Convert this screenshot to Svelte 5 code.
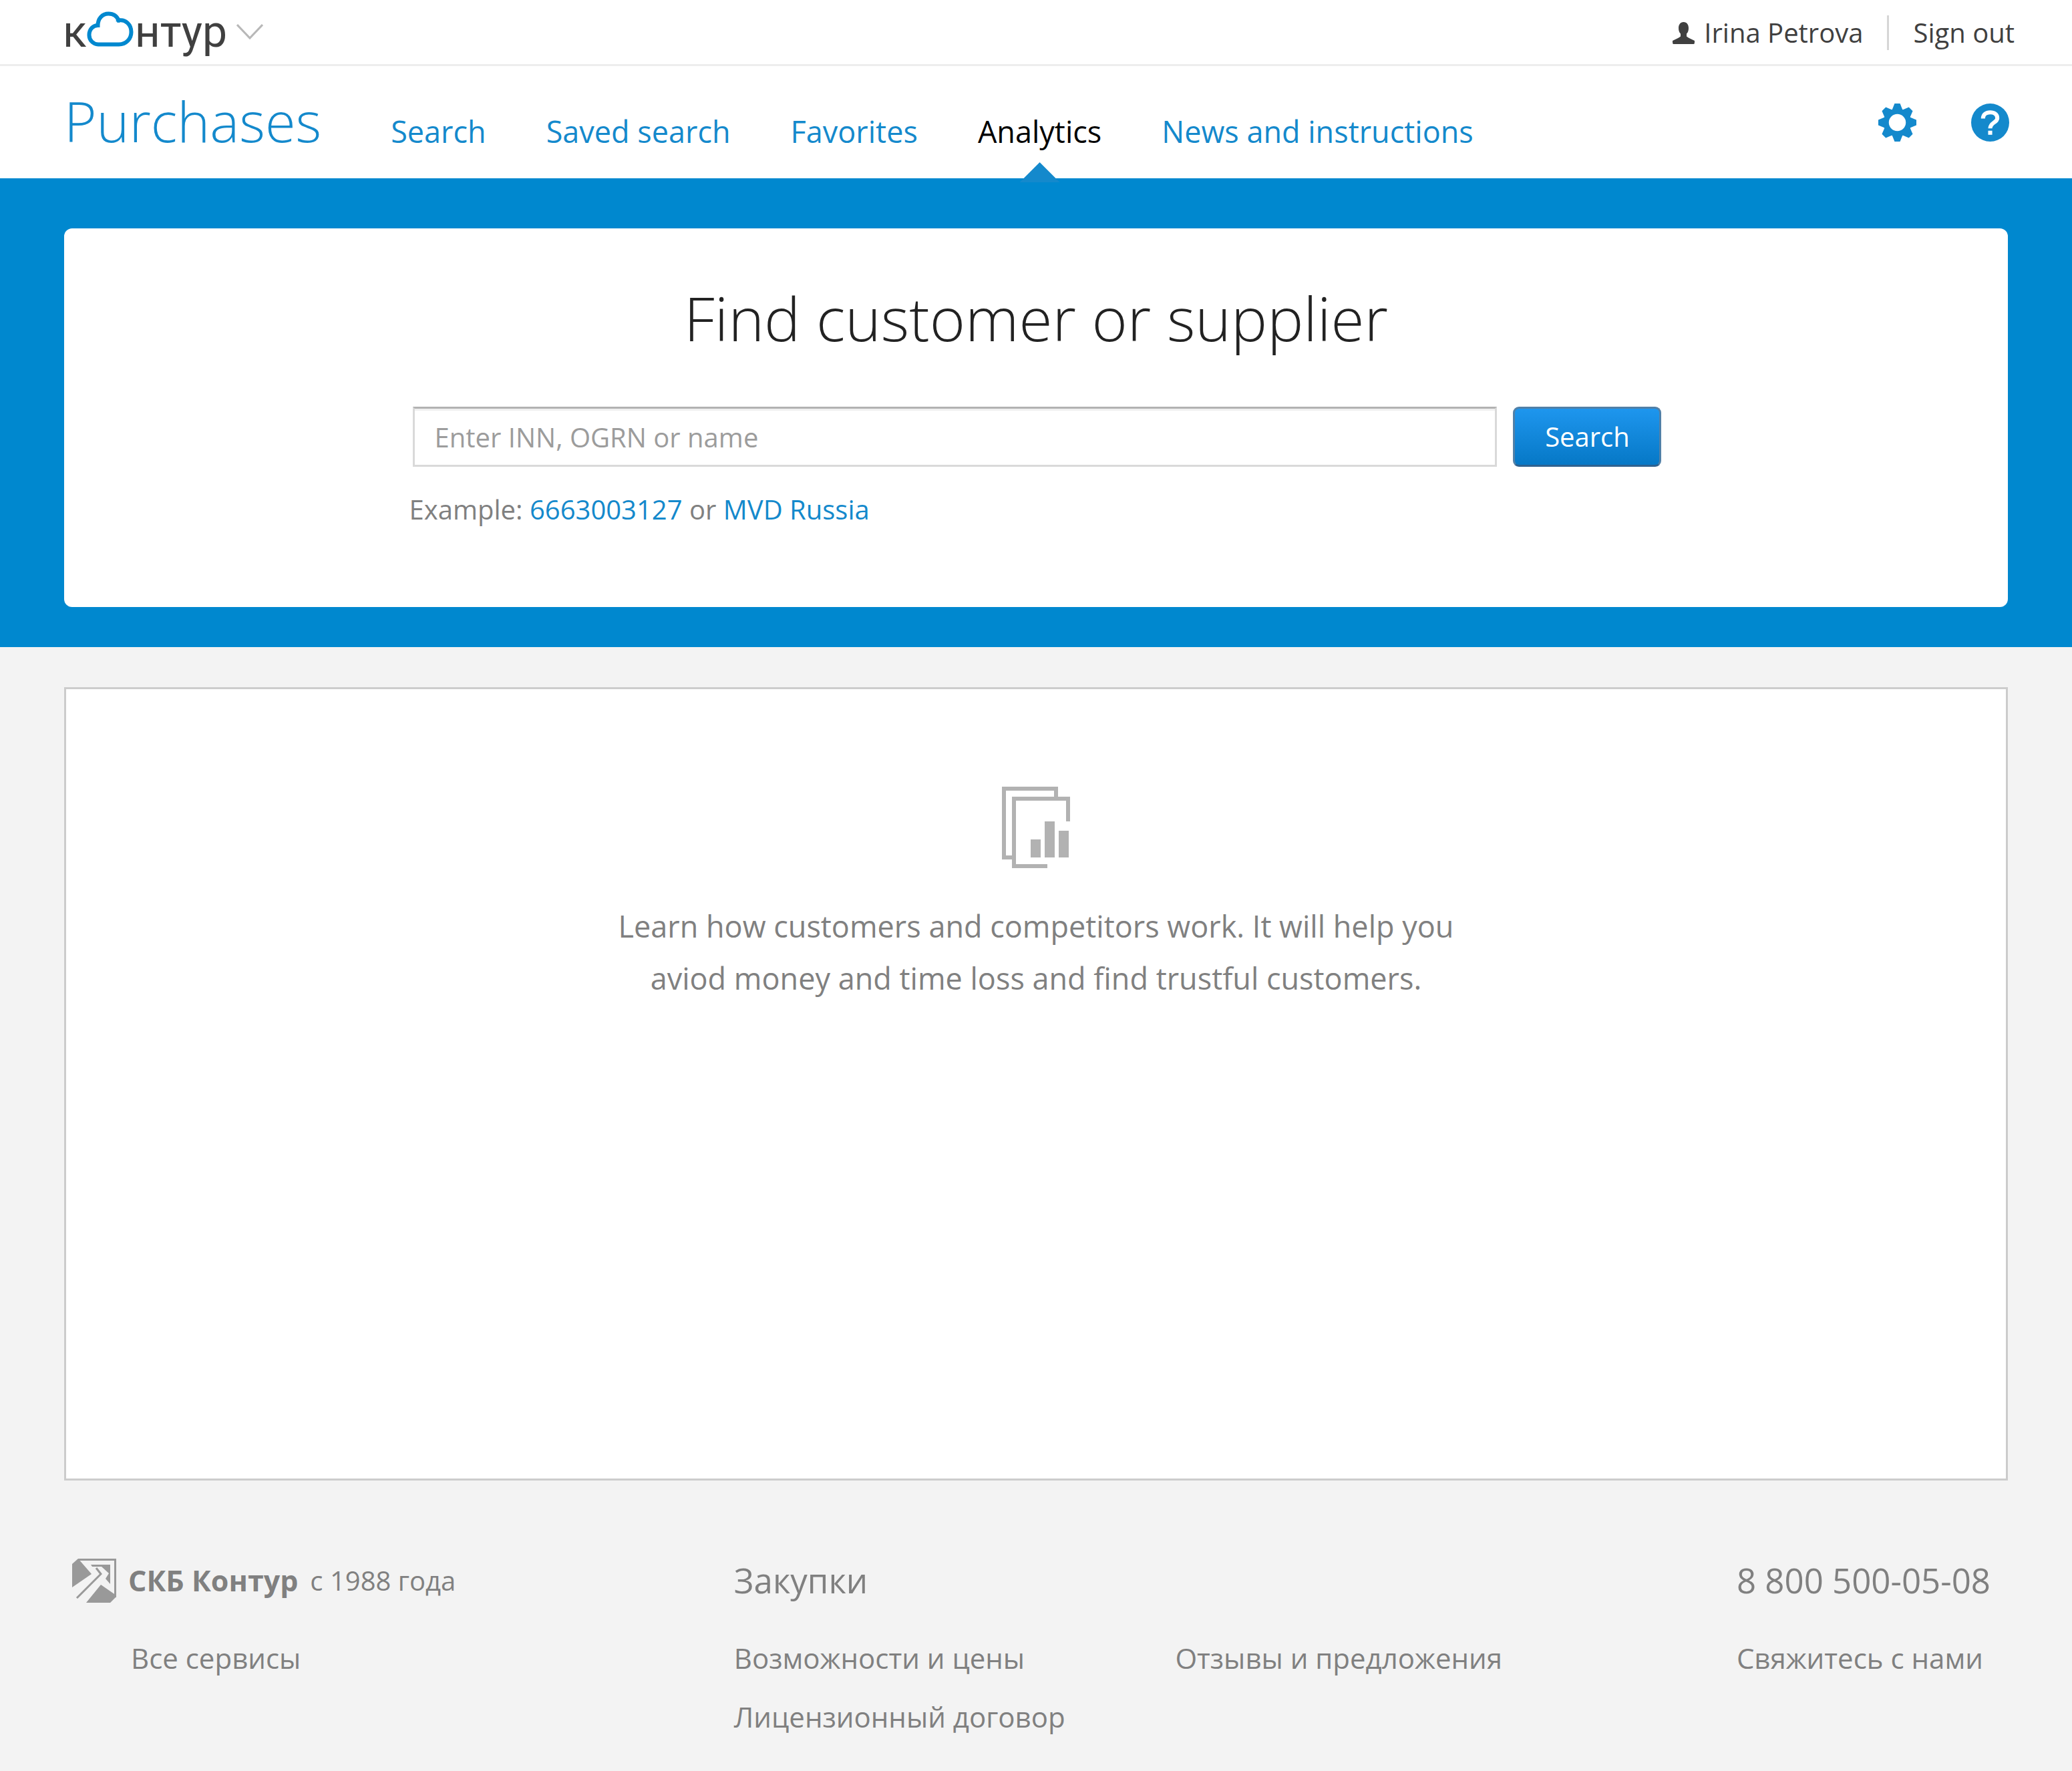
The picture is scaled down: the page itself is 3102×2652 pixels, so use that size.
<script>
  const nav = [
    { label: 'Search' },
    { label: 'Saved search' },
    { label: 'Favorites' },
    { label: 'Analytics', active: true },
    { label: 'News and instructions' }
  ];
  let query = $state('');
</script>

<div class="page">
  <header>
    <div class="topbar">
      <button class="brand" aria-label="Контур">
        <span class="word">к</span>
        <svg class="cloud" viewBox="0 0 70 54" aria-hidden="true">
          <path d="M17 49.500a14 14 0 0 1-13.500-14c0-9 6-14.500 13-14.500C16.500 11 23 3.500 32.500 3.500c7 0 12.500 3.500 15 10C58 11.500 66.500 20 66.500 31c0 10.500-8 18.500-18.500 18.500zM16 22V20.500M46 16l1.500-3" />
        </svg>
        <span class="word">нтур</span>
        <svg class="chevron" viewBox="0 0 40 24" aria-hidden="true"><path d="M1 1l19 20L39 1" /></svg>
      </button>
      <div class="account">
        <a class="user" href="#profile">
          <svg viewBox="0 0 33 33" aria-hidden="true">
            <path d="M16.500 0c5 0 7.500 4 7.500 9 0 4-1 6.500-3 8.500v4c3 3 7 3.500 12 6.500 0 3 0 5-1.500 5h-30C0 33 0 31 0 28c5-3 9-3.500 12-6.500v-4c-2-2-3-4.500-3-8.500 0-5 2.500-9 7.500-9z" />
          </svg>
          Irina Petrova
        </a>
        <a class="signout" href="#signout">Sign out</a>
      </div>
    </div>
    <div class="mainbar">
      <a class="title" href="#home">Purchases</a>
      <nav>
        {#each nav as item}
          <a href="#{item.label}" class:active={item.active}>{item.label}</a>
        {/each}
      </nav>
      <div class="tools">
        <button aria-label="Settings">
          <svg viewBox="-28 -28 56 56" aria-hidden="true">
            <defs><path id="tooth" d="M-8-18L-4-28H4L8-18z" /></defs>
            {#each [0, 45, 90, 135, 180, 225, 270, 315] as angle}
              <use href="#tooth" transform="rotate({angle})" />
            {/each}
            <circle class="ring" r="16.500" />
          </svg>
        </button>
        <button aria-label="Help">
          <svg viewBox="-28 -28 56 56" aria-hidden="true">
            <circle r="28" />
            <path class="mark" d="M-10.500-6C-10.500-12-6-15 0-15s10.500 3 10.500 8.500C10.500 0 0 0 0 8.500" />
            <rect class="dot" x="-3" y="12" width="6" height="6" />
          </svg>
        </button>
      </div>
    </div>
  </header>

  <section class="hero">
    <div class="card">
      <form onsubmit={(e) => e.preventDefault()}>
        <h1><label for="query">Find customer or supplier</label></h1>
        <div class="row">
          <input id="query" type="text" placeholder="Enter INN, OGRN or name" bind:value={query} />
          <button>Search</button>
        </div>
        <p>Example: <a href="#inn">6663003127</a> or <a href="#mvd">MVD Russia</a></p>
      </form>
    </div>
  </section>

  <main>
    <svg viewBox="0 0 102 122" aria-hidden="true">
      <path class="line" d="M15 106H3V3H81V15M99 52V18H18V119H68" />
      <path d="M43 79h15v27H43zM64 52h15v54H64zM85 66h15v40H85z" />
    </svg>
    <p>Learn how customers and competitors work. It will help you<br />aviod money and time loss and find trustful customers.</p>
  </main>

  <footer>
    <div class="col about">
      <a class="company" href="#company">
        <svg viewBox="0 0 66 66" aria-hidden="true">
          <path d="M9 0L29 23 0 43V8zM43 39L21 66H57L66 57V55z" />
          <path d="M28 9H57V38L50 30 55 22 44 12H30z" />
          <path class="thin" d="M9 1.500H64.500V58M36 14L43 23 7 59" />
        </svg>
        <strong>СКБ Контур</strong>
        <span>с 1988 года</span>
      </a>
      <a class="indent" href="#services">Все сервисы</a>
    </div>
    <div class="col product">
      <a class="lead" href="#product">Закупки</a>
      <a href="#prices">Возможности и цены</a>
      <a href="#license">Лицензионный договор</a>
    </div>
    <div class="col feedback">
      <a href="#feedback">Отзывы и предложения</a>
    </div>
    <div class="col contact">
      <a class="lead" href="tel:88005000508">8 800 500-05-08</a>
      <a href="#contact">Свяжитесь с нами</a>
    </div>
  </footer>
</div>

<style>
  :global(body) { background: #f3f3f3; }
  .page {
    font-family: 'Segoe UI', 'Open Sans', 'Noto Sans', sans-serif;
    font-size: 40px;
    line-height: 60px;
    color: #808080;
  }
  a { color: inherit; text-decoration: none; }
  button { font: inherit; border: 0; padding: 0; background: none; cursor: pointer; }
  svg { display: block; flex: none; }
  p, h1 { margin: 0; font-weight: 400; }

  header { background: #fff; }
  .topbar {
    display: flex;
    justify-content: space-between;
    height: 96px;
    padding: 0 86px 0 94px;
    border-bottom: 3px solid #ededed;
    color: #404040;
  }
  .brand { display: flex; align-items: center; color: #404040; }
  .word { font-family: Roboto, sans-serif; font-size: 66px; line-height: 90px; }
  .cloud { width: 70px; height: 54px; margin: 0 2px 8px 0; fill: none; stroke: #0088cf; stroke-width: 6; }
  .chevron { width: 40px; height: 24px; margin-left: 14px; fill: none; stroke: #b8b8b8; stroke-width: 3; }
  .account { display: flex; align-items: center; gap: 36px; padding-top: 2px; }
  .user { display: flex; align-items: center; gap: 14px; }
  .user svg { width: 33px; height: 33px; fill: #404040; }
  .signout { padding-left: 36px; border-left: 3px solid #d6d6d6; line-height: 52px; }

  .mainbar { display: flex; height: 168px; padding: 0 94px 0 96px; color: #1489cc; }
  .title { font-size: 83px; font-weight: 300; line-height: 164px; }
  nav { display: flex; gap: 90px; margin-left: 104px; font-size: 45px; line-height: 196px; }
  nav a { position: relative; }
  nav .active { color: #000; }
  nav .active::after {
    content: '';
    position: absolute;
    left: 50%;
    bottom: -6px;
    width: 60px;
    height: 30px;
    margin-left: -30px;
    background: #1489cc;
    clip-path: polygon(50% 0, 100% 100%, 0 100%);
  }
  .tools { display: flex; align-items: center; gap: 82px; margin-left: auto; }
  .tools svg { width: 57px; height: 57px; fill: #1489cc; }
  .tools .ring { fill: none; stroke: #1489cc; stroke-width: 8; }
  .tools .mark { fill: none; stroke: #fff; stroke-width: 6; }
  .tools .dot { fill: #fff; }

  .hero { padding: 75px 96px 60px; background: #0088cf; }
  .card { box-sizing: border-box; min-height: 567px; padding-top: 76px; border-radius: 12px; background: #fff; }
  form { width: 64.5%; margin: 0 auto; }
  h1 { font-size: 91px; font-weight: 300; line-height: 116px; text-align: center; color: #222; }
  .row { display: flex; gap: 24px; margin-top: 75px; padding: 0 2px 0 5px; }
  input {
    flex: 1;
    min-width: 0;
    height: 90px;
    box-sizing: border-box;
    padding: 0 30px;
    border: 3px solid #d9d9d9;
    border-top-color: #b2b2b2;
    box-shadow: inset 0 3px #f0f0f0;
    font: inherit;
    color: #222;
  }
  input::placeholder { color: #9c9c9c; opacity: 1; }
  .row button {
    width: 222px;
    height: 90px;
    border: 3px solid #5080a8;
    border-bottom-color: #2f6290;
    border-radius: 9px;
    background: linear-gradient(#1e96ee, #0678c6);
    color: #fff;
  }
  form p { margin-top: 34px; }
  form p a { color: #1489cc; }

  main {
    display: flex;
    flex-direction: column;
    align-items: center;
    box-sizing: border-box;
    min-height: 1188px;
    margin: 60px 96px 0;
    padding-top: 146px;
    border: 3px solid #ccc;
    background: #fff;
    font-size: 45px;
    line-height: 78px;
    text-align: center;
  }
  main svg { width: 102px; height: 122px; margin-bottom: 48px; fill: #b2b2b2; }
  main .line { fill: none; stroke: #b2b2b2; stroke-width: 6; }

  footer {
    display: grid;
    grid-template-columns: 34.5% 23% 1fr auto;
    padding: 114px 122px 42px 108px;
    font-size: 42px;
    line-height: 88px;
  }
  .col { display: flex; flex-direction: column; align-items: flex-start; }
  .lead { font-size: 51px; line-height: 70px; margin-bottom: 38px; }
  .company { display: flex; align-items: center; gap: 18px; font-size: 40px; line-height: 72px; margin-bottom: 36px; }
  .company svg { width: 66px; height: 66px; fill: #999; }
  .company .thin { fill: none; stroke: #999; stroke-width: 3; }
  .company strong { font-size: 43px; }
  .indent { margin-left: 88px; }
  .feedback { padding-top: 108px; }
</style>
